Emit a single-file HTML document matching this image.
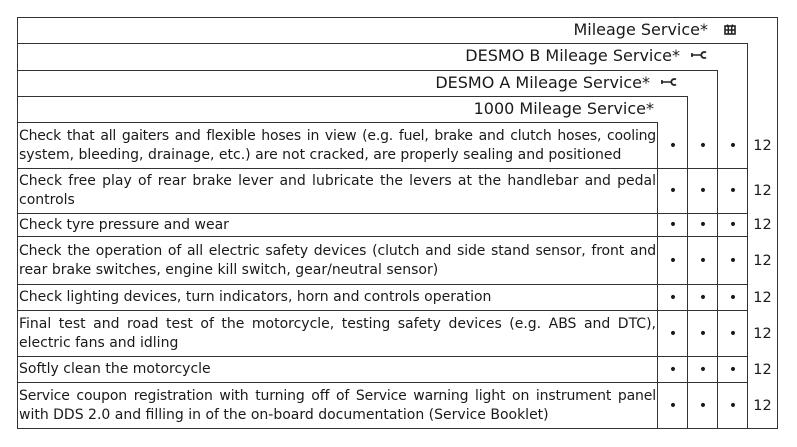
<!DOCTYPE html>
<html><head><meta charset="utf-8"><style>
body{margin:0;width:797px;height:447px;background:#fff;position:relative;overflow:hidden;font-family:"DejaVu Sans","Liberation Sans",sans-serif;color:#1a1a1a}
.l{position:absolute;background:#333}
.h{position:absolute;font-size:16px;white-space:nowrap;text-align:right}
.r{position:absolute;left:19px;width:637px;font-size:14px;line-height:19px;text-align:justify;display:flex;flex-direction:column;justify-content:center}
.r span{display:block;white-space:nowrap}
.r span.j{text-align-last:justify;white-space:normal}
.d{position:absolute;width:30px;text-align:center;font-size:14px;display:flex;align-items:center;justify-content:center}
.n{position:absolute;left:748px;width:29px;text-align:center;font-size:14.5px;display:flex;align-items:center;justify-content:center}
</style></head><body>
<div class="l" style="left:17px;top:17px;width:761px;height:1px"></div>
<div class="l" style="left:17px;top:17px;width:1px;height:412px"></div>
<div class="l" style="left:777px;top:17px;width:1px;height:412px"></div>
<div class="l" style="left:17px;top:428px;width:761px;height:1px"></div>
<div class="l" style="left:17px;top:43px;width:731px;height:1px"></div>
<div class="l" style="left:17px;top:70px;width:701px;height:1px"></div>
<div class="l" style="left:17px;top:96px;width:671px;height:1px"></div>
<div class="l" style="left:17px;top:122px;width:641px;height:1px"></div>
<div class="l" style="left:747px;top:43px;width:1px;height:386px"></div>
<div class="l" style="left:717px;top:70px;width:1px;height:359px"></div>
<div class="l" style="left:687px;top:96px;width:1px;height:333px"></div>
<div class="l" style="left:657px;top:122px;width:1px;height:307px"></div>
<div class="l" style="left:17px;top:168px;width:731px;height:1px"></div>
<div class="l" style="left:17px;top:213px;width:731px;height:1px"></div>
<div class="l" style="left:17px;top:236px;width:731px;height:1px"></div>
<div class="l" style="left:17px;top:284px;width:731px;height:1px"></div>
<div class="l" style="left:17px;top:310px;width:731px;height:1px"></div>
<div class="l" style="left:17px;top:356px;width:731px;height:1px"></div>
<div class="l" style="left:17px;top:382px;width:731px;height:1px"></div>

<div class="h" style="right:89px;top:20px">Mileage Service*</div>
<svg style="position:absolute;left:724px;top:24px" width="12" height="11" viewBox="0 0 12 11"><rect x="1" y="2" width="10" height="8" fill="none" stroke="#222" stroke-width="1.6"/><path d="M1 6H11M4.3 2V10M7.7 2V10M3.5 0.5V3M8.5 0.5V3" stroke="#222" stroke-width="1.5"/></svg>
<div class="h" style="right:117px;top:46px">DESMO B Mileage Service*</div>
<svg style="position:absolute;left:691px;top:50px" width="16" height="10" viewBox="0 0 16 10"><path d="M0 5H11M1 3V7" stroke="#222" stroke-width="1.6"/><path d="M15 2.5A3 3 0 1 0 15 7.5" fill="none" stroke="#222" stroke-width="1.8"/></svg>
<div class="h" style="right:147px;top:73px">DESMO A Mileage Service*</div>
<svg style="position:absolute;left:661px;top:77px" width="16" height="10" viewBox="0 0 16 10"><path d="M0 5H11M1 3V7" stroke="#222" stroke-width="1.6"/><path d="M15 2.5A3 3 0 1 0 15 7.5" fill="none" stroke="#222" stroke-width="1.8"/></svg>
<div class="h" style="right:143px;top:99px">1000 Mileage Service*</div>

<div class="r" style="top:123px;height:45px"><span class="j" style="letter-spacing:-0.2px">Check that all gaiters and flexible hoses in view (e.g. fuel, brake and clutch hoses, cooling</span><span>system, bleeding, drainage, etc.) are not cracked, are properly sealing and positioned</span></div>
<div class="r" style="top:169px;height:44px"><span class="j">Check free play of rear brake lever and lubricate the levers at the handlebar and pedal</span><span>controls</span></div>
<div class="r" style="top:214px;height:22px"><span>Check tyre pressure and wear</span></div>
<div class="r" style="top:237px;height:47px"><span class="j" style="letter-spacing:-0.1px">Check the operation of all electric safety devices (clutch and side stand sensor, front and</span><span>rear brake switches, engine kill switch, gear/neutral sensor)</span></div>
<div class="r" style="top:285px;height:25px"><span>Check lighting devices, turn indicators, horn and controls operation</span></div>
<div class="r" style="top:311px;height:45px"><span class="j">Final test and road test of the motorcycle, testing safety devices (e.g. ABS and DTC),</span><span>electric fans and idling</span></div>
<div class="r" style="top:357px;height:25px"><span>Softly clean the motorcycle</span></div>
<div class="r" style="top:383px;height:45px"><span class="j" style="letter-spacing:-0.15px">Service coupon registration with turning off of Service warning light on instrument panel</span><span>with DDS 2.0 and filling in of the on-board documentation (Service Booklet)</span></div>

<div id="cells"></div>
<script>
var rows=[[123,45],[169,44],[214,22],[237,47],[285,25],[311,45],[357,25],[383,45]];
var h='';rows.forEach(function(r){[658,688,718].forEach(function(x){h+='<div class="d" style="left:'+x+'px;top:'+r[0]+'px;height:'+r[1]+'px">•</div>';});h+='<div class="n" style="top:'+r[0]+'px;height:'+r[1]+'px">12</div>';});
document.getElementById('cells').innerHTML=h;
</script>
</body></html>
